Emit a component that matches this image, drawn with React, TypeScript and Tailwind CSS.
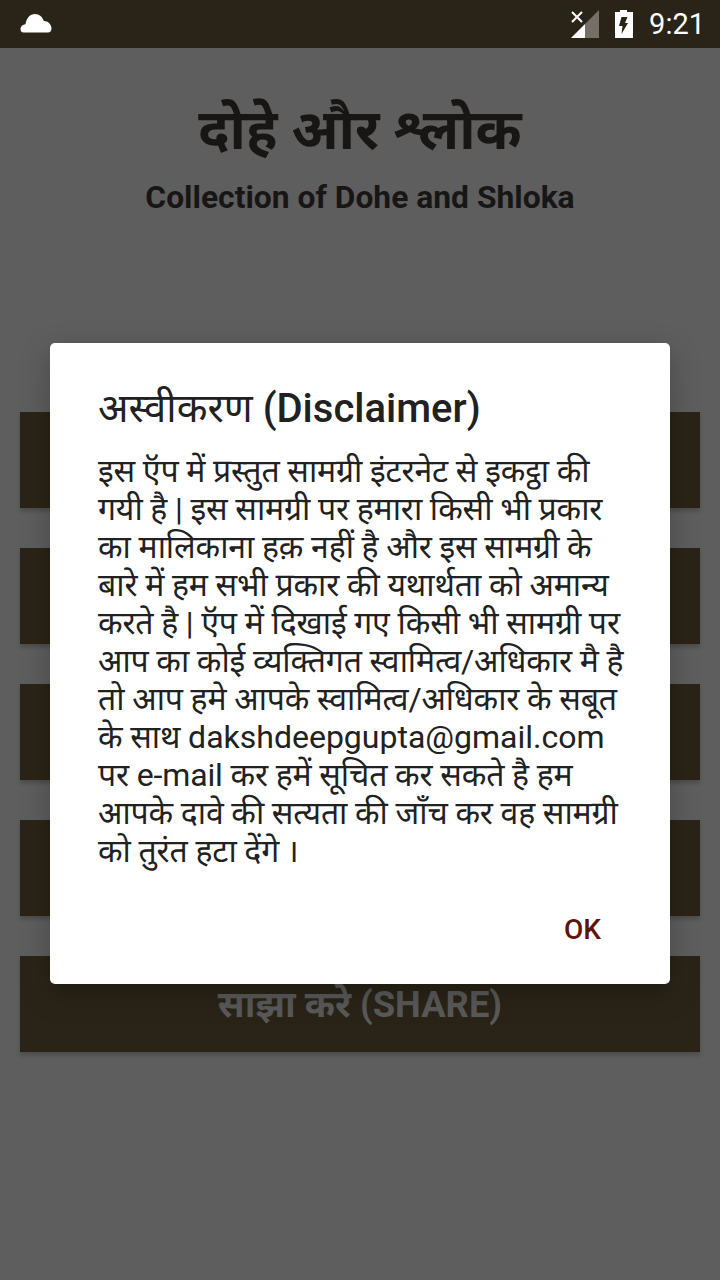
import React from 'react';

const FONT = "font-['Roboto','Noto_Sans','Noto_Sans_Devanagari','Lohit_Devanagari',sans-serif]";

const lines = [
  'इस ऍप में प्रस्तुत सामग्री इंटरनेट से इकट्ठा की',
  'गयी है | इस सामग्री पर हमारा किसी भी प्रकार',
  'का मालिकाना हक़ नहीं है और इस सामग्री के',
  'बारे में हम सभी प्रकार की यथार्थता को अमान्य',
  'करते है | ऍप में दिखाई गए किसी भी सामग्री पर',
  'आप का कोई व्यक्तिगत स्वामित्व/अधिकार मै है',
  'तो आप हमे आपके स्वामित्व/अधिकार के सबूत',
];

const lastLines = [
  'पर e-mail कर हमें सूचित कर सकते है हम',
  'आपके दावे की सत्यता की जाँच कर वह सामग्री',
  'को तुरंत हटा देंगे ।',
];

const StatusBar = () => (
  <div className="h-12 bg-[#2a2418] flex items-center justify-between pl-[20px] pr-[15px] shrink-0">
    <svg width="32" height="20" viewBox="0 0 32 20" className="mt-[-2px]">
      <path fill="#fff" d="M3.5 19.5 C1.5 19.5 0.5 18 0.5 16 C0.5 13.5 2.5 11.5 5.5 11.3 C6.5 5 10 1 15 1 C19.5 1 22.5 4 23.8 8 C28 8 31.5 11.5 31.5 15.5 C31.5 18 30 19.5 28 19.5 Z" />
    </svg>
    <div className="flex items-center">
      <svg width="30" height="30" viewBox="0 0 30 30">
        <path fill="#fff" d="M1 29 L15 15 V29 Z" />
        <path fill="#fff" fillOpacity="0.35" d="M15 15 L29 1 V29 H15 Z" />
        <path stroke="#fff" strokeWidth="2" fill="none" d="M2 3 L12 13 M12 3 L2 13" />
      </svg>
      <svg width="20" height="30" viewBox="0 0 20 30" className="ml-[14px]">
        <path fill="#fff" fillRule="evenodd" d="M6 1 H13 V3 H19 V29 H1 V3 H6 Z M7.5 8 H13.5 L11 14 H14 L7.5 25 L8.5 17 H5 Z" />
      </svg>
      <span className={`${FONT} text-white text-[29px] ml-[15px] leading-none`}>9:21</span>
    </div>
  </div>
);

const Button = ({ label }: { label?: string }) => (
  <div className="h-24 bg-[#2a2418] shadow-[0_3px_4px_rgba(0,0,0,0.2)] flex items-center justify-center text-[#5a5a5a] text-[36.4px] font-bold pt-[3px]">
    {label}
  </div>
);

export default function App() {
  return (
    <div className={`${FONT} relative w-[720px] h-[1280px] bg-[#5f5e5f] flex flex-col overflow-hidden`}>
      <StatusBar />

      <div className="flex flex-col items-center pt-[48px] text-[#171615] font-bold">
        <h1 className="text-[55.6px] leading-[68px]">दोहे और श्लोक</h1>
        <p className="text-[31.8px] leading-[40px] mt-[13px]">Collection of Dohe and Shloka</p>
      </div>

      <div className="flex flex-col gap-10 px-5 mt-[195px]">
        <Button />
        <Button />
        <Button />
        <Button />
        <Button label="साझा करे (SHARE)" />
      </div>

      <div className="absolute inset-x-0 top-[47px] bottom-0 flex items-center justify-center">
        <div className="w-[620px] h-[641px] bg-white rounded-[5px] shadow-[0_10px_30px_rgba(0,0,0,0.25)] pl-[48px] pr-[20px] pt-[41px] flex flex-col">
          <h2 className="text-[40px] leading-[50px] text-[#212121]">
            अस्वीकरण <span className="font-medium">(Disclaimer)</span>
          </h2>
          <div className="text-[32px] leading-[38px] text-[#212121] mt-[18px] whitespace-nowrap tracking-[-0.15px]">
            {lines.map((line) => (
              <p key={line}>{line}</p>
            ))}
            <p>
              के साथ <span className="tracking-normal">dakshdeepgupta@gmail.com</span>
            </p>
            {lastLines.map((line) => (
              <p key={line}>{line}</p>
            ))}
          </div>
          <div className="flex justify-end mt-auto pb-[34px]">
            <button className="text-[28px] leading-[40px] font-medium text-[#5e1507] mr-[49px]">OK</button>
          </div>
        </div>
      </div>
    </div>
  );
}
